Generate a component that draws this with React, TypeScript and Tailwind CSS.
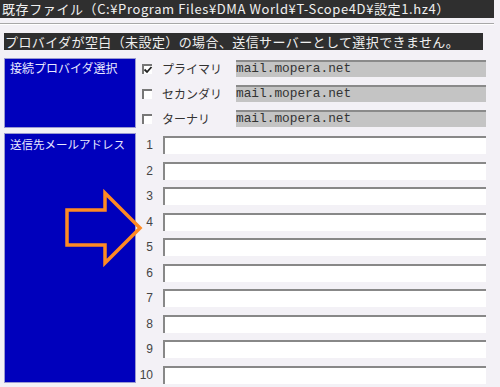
const jp = { fontFamily: '"Noto Sans CJK JP", "Noto Sans", sans-serif' };
const mono = { fontFamily: '"Liberation Mono", "DejaVu Sans Mono", monospace' };

const providers = [
  { label: "プライマリ", checked: true },
  { label: "セカンダリ", checked: false },
  { label: "ターナリ", checked: false },
];

function CheckBox({ checked }: { checked: boolean }) {
  return (
    <div className="relative w-[10px] h-[10px] border-t-2 border-l-2 border-[#777] bg-white">
      {checked && (
        <svg className="absolute -left-[1px] -top-[1px]" width="10" height="10" viewBox="0 0 10 10">
          <path d="M1.5 4.5 L4 7 L8.5 2" stroke="#222" strokeWidth="1.8" fill="none" />
        </svg>
      )}
    </div>
  );
}

export default function App() {
  return (
    <div className="relative w-[500px] h-[387px] bg-[#f3f1f6] overflow-hidden" style={jp}>
      {/* title */}
      <div className="w-[494px] h-[18px] bg-[#2f2f2f] text-[#f0f0f0] text-[13px] tracking-[0.6px] leading-[18px] pl-[2px] whitespace-nowrap">
        既存ファイル（C:¥Program Files¥DMA World¥T-Scope4D¥設定1.hz4）
      </div>
      <div className="mt-[5px] w-[494px] h-[2px] bg-[#a8a8a8] border-b border-white" />

      <div className="mt-[8px] ml-[4px] w-[479px] h-[17px] bg-[#2f2f2f] text-[#f0f0f0] text-[13px] tracking-[0.4px] leading-[17px] pl-[1px] whitespace-nowrap">
        プロバイダが空白（未設定）の場合、送信サーバーとして選択できません。
      </div>

      {/* provider select */}
      <div className="mt-[8px] ml-[4px] flex">
        <div className="w-[132px] h-[70px] bg-[#0000bc] border border-[#9a9ad0] text-[#e8e8ff] text-[12px] leading-[14px] pl-[5px] pt-[2px]">
          接続プロバイダ選択
        </div>
        <div className="flex flex-col gap-[8px] pt-[2px]">
          {providers.map((p) => (
            <div key={p.label} className="flex items-center h-[17px]">
              <div className="w-[18px] flex justify-end pr-[2px]">
                <CheckBox checked={p.checked} />
              </div>
              <div className="w-[82px] pl-[8px] text-[12px] text-[#333] leading-[17px]">{p.label}</div>
              <div
                className="w-[250px] h-[17px] bg-[#c4c4c4] border-t-2 border-[#8a8a8a] text-[12.8px] leading-[14px] text-[#333] overflow-hidden whitespace-nowrap"
                style={mono}
              >
                mail.mopera.net
              </div>
            </div>
          ))}
        </div>
      </div>

      {/* addresses */}
      <div className="mt-[5px] ml-[4px] flex">
        <div className="w-[132px] h-[250px] bg-[#0000bc] border border-[#9a9ad0] text-[#e8e8ff] text-[11.5px] leading-[14px] pl-[5px] pt-[3px] whitespace-nowrap">
          送信先メールアドレス
        </div>
        <div className="flex flex-col gap-[7.5px] pt-[3px]">
          {Array.from({ length: 10 }, (_, i) => (
            <div key={i} className="flex items-center h-[18px]">
              <div
                className="w-[27px] text-right pr-[10px] text-[12px] text-[#444] leading-[18px]"
                style={{ fontFamily: '"Liberation Sans", Arial, sans-serif' }}
              >
                {i + 1}
              </div>
              <div className="w-[323px] h-[18px] bg-white border-t-2 border-l-2 border-[#888]" />
            </div>
          ))}
        </div>
      </div>

      {/* orange arrow overlay */}
      <svg className="absolute left-0 top-0 pointer-events-none" width="500" height="387">
        <polygon
          points="67,210 105,210 105,193 140,228 105,263 105,245 67,245"
          fill="none"
          stroke="#ff8a22"
          strokeWidth="3.5"
          strokeLinejoin="miter"
        />
      </svg>
    </div>
  );
}
